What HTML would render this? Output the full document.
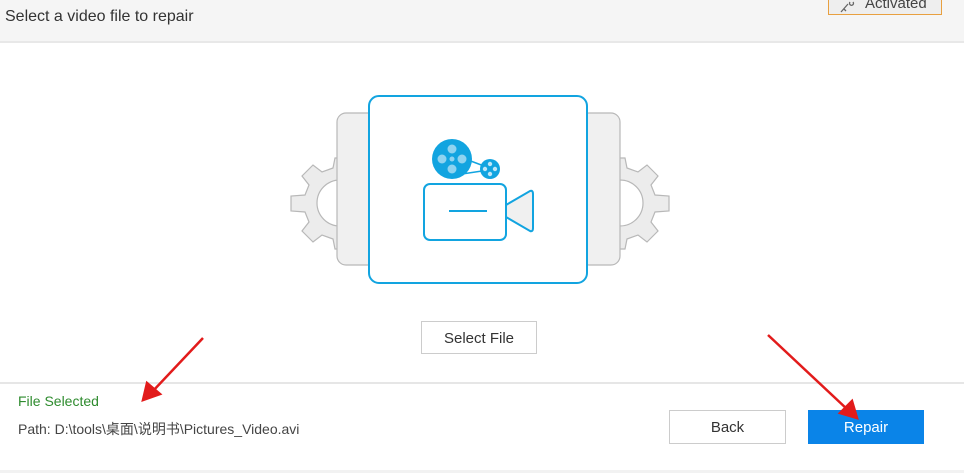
<!DOCTYPE html>
<html><head><meta charset="utf-8"><style>
body{margin:0;width:964px;height:473px;overflow:hidden;background:#fff;font-family:"Liberation Sans","Noto Sans CJK SC",sans-serif;position:relative}
.hdr{position:absolute;left:0;top:0;width:964px;height:41px;background:#f5f5f5;border-bottom:2px solid #e8e8e8}
.t{position:absolute;left:5px;top:8px;font-size:16px;color:#333}
.act{position:absolute;left:828px;top:-12px;width:114px;height:27px;border:1px solid #e8a040;background:#eee;font-size:15px;color:#444;box-sizing:border-box;padding:6px 0 0 36px}
.btn{position:absolute;box-sizing:border-box;font-size:15px;text-align:center}
.sep{position:absolute;left:0;top:382px;width:964px;height:2px;background:#e6e6e6}
</style></head><body>
<div class="hdr"><div class="t">Select a video file to repair</div>
<div class="act">Activated</div>
<svg style="position:absolute;left:838px;top:0" width="22" height="14"><path d="M3 12 L10 4 M6 9 L8 11 M12 2 a2 2 0 1 0 3 0" stroke="#666" stroke-width="1.3" fill="none"/></svg></div>
<svg style="position:absolute;left:0;top:0" width="964" height="473">
<g fill="#ececec" stroke="#b8b8b8" stroke-width="1.2">
<path d="M345 158 L335 158 L333 168 L322 172 L313 165 L302 176 L309 185 L305 195 L291 196 L291 211 L305 212 L309 222 L302 231 L313 242 L322 235 L333 239 L335 249 L345 249 Z"/>
<path d="M615 158 L625 158 L627 168 L638 172 L647 165 L658 176 L651 185 L655 195 L669 196 L669 211 L655 212 L651 222 L658 231 L647 242 L638 235 L627 239 L625 249 L615 249 Z"/>
</g>
<circle cx="340" cy="203" r="23" fill="#fff" stroke="#b8b8b8" stroke-width="1.2"/><circle cx="620" cy="203" r="23" fill="#fff" stroke="#b8b8b8" stroke-width="1.2"/>
<g fill="#f0f0f0" stroke="#b8b8b8" stroke-width="1.2">
<rect x="337" y="113" width="40" height="152" rx="9"/>
<rect x="580" y="113" width="40" height="152" rx="9"/>
</g>
<rect x="369" y="96" width="218" height="187" rx="10" fill="#fff" stroke="#12a4e0" stroke-width="2"/>
<circle cx="452" cy="159" r="20" fill="#12a4e0"/>
<g fill="#8fd3f0"><circle cx="452" cy="149" r="4.5"/><circle cx="452" cy="169" r="4.5"/><circle cx="442" cy="159" r="4.5"/><circle cx="462" cy="159" r="4.5"/><circle cx="452" cy="159" r="2.5"/></g>
<line x1="468" y1="160" x2="484" y2="166" stroke="#12a4e0" stroke-width="1.5"/>
<line x1="462" y1="174" x2="482" y2="171" stroke="#12a4e0" stroke-width="1.5"/>
<circle cx="490" cy="169" r="10" fill="#12a4e0"/>
<g fill="#bfe6f7"><circle cx="490" cy="164" r="2.2"/><circle cx="490" cy="174" r="2.2"/><circle cx="485" cy="169" r="2.2"/><circle cx="495" cy="169" r="2.2"/></g>
<rect x="424" y="184" width="82" height="56" rx="6" fill="#fff" stroke="#12a4e0" stroke-width="2"/>
<line x1="449" y1="211" x2="487" y2="211" stroke="#12a4e0" stroke-width="2"/>
<path d="M506 205 L530 191 Q533 190 533 194 L533 228 Q533 232 530 231 L506 217 Z" fill="#f0f0f0" stroke="#12a4e0" stroke-width="2"/>
</svg>
<div class="btn" style="left:421px;top:321px;width:116px;height:33px;border:1px solid #ccc;padding-top:8px;color:#333">Select File</div>
<div class="sep"></div>
<div style="position:absolute;left:18px;top:393px;font-size:14px;color:#2e8b2e">File Selected</div>
<div style="position:absolute;left:18px;top:419px;font-size:14px;color:#444">Path: D:\tools\桌面\说明书\Pictures_Video.avi</div>
<div class="btn" style="left:669px;top:410px;width:117px;height:34px;border:1px solid #ccc;padding-top:8px;color:#333">Back</div>
<div class="btn" style="left:808px;top:410px;width:116px;height:34px;background:#0a84e8;padding-top:9px;color:#fff">Repair</div>
<div style="position:absolute;left:0;top:470px;width:964px;height:3px;background:#f2f2f2"></div>
<svg style="position:absolute;left:0;top:0" width="964" height="473">
<g stroke="#e21b1b" stroke-width="2.5" fill="#e21b1b">
<line x1="203" y1="338" x2="152" y2="392"/><path d="M143 400 L147 383 L160 394 Z"/>
<line x1="768" y1="335" x2="848" y2="410"/><path d="M857 418 L840 413 L852 401 Z"/>
</g></svg>
</body></html>
